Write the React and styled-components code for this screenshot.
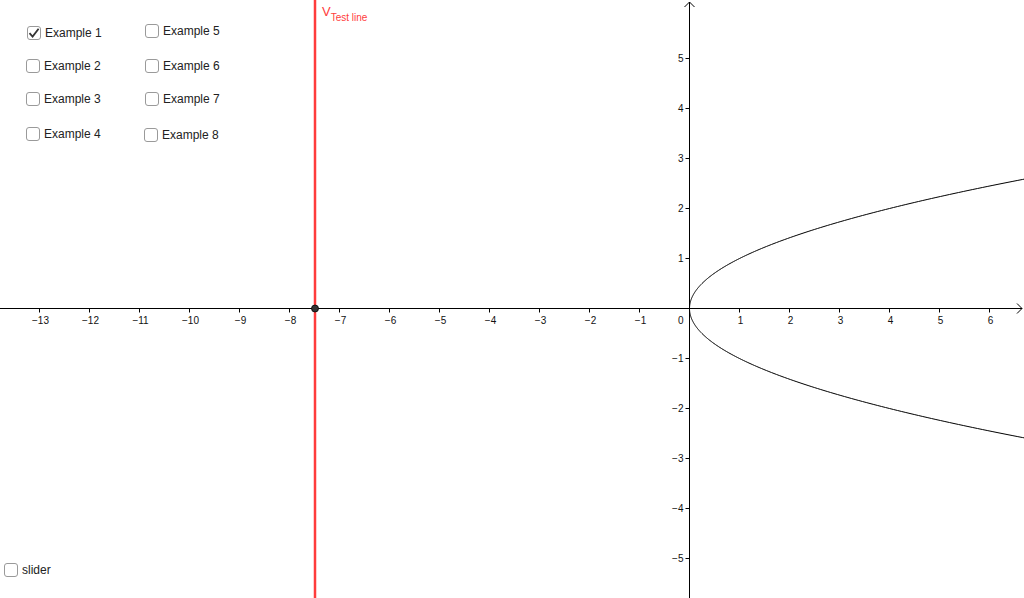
import React from 'react'
import styled, { createGlobalStyle } from 'styled-components'

const W = 1024
const H = 598
const OX = 689.5
const OY = 308.5
const UNIT = 50

const GlobalStyle = createGlobalStyle`
  html, body {
    margin: 0;
    padding: 0;
    background: #fff;
    overflow: hidden;
  }
  body {
    font-family: "Liberation Sans", Arial, sans-serif;
  }
`

const Canvas = styled.div`
  position: relative;
  width: ${W}px;
  height: ${H}px;
  background: #fff;
  overflow: hidden;
`

const Graph = styled.svg`
  display: block;
  font-family: "Liberation Sans", Arial, sans-serif;
`

const Toggle = styled.label`
  position: absolute;
  left: ${({ x }) => x}px;
  top: ${({ y }) => y}px;
  display: flex;
  align-items: center;
  gap: 4px;
  font-size: 12px;
  color: #222;
  cursor: pointer;
  user-select: none;
`

const Box = styled.span`
  box-sizing: border-box;
  width: 14px;
  height: 14px;
  border: 1.5px solid #9a9a9a;
  border-radius: 3px;
  background: #fff;
  display: flex;
  align-items: center;
  justify-content: center;
`

const RedLabel = styled.div`
  position: absolute;
  left: 322px;
  top: 5px;
  color: #ff3c3c;
  font-size: 13px;
  line-height: 1;
`

const Sub = styled.sub`
  font-size: 10px;
  vertical-align: -5px;
`

function CheckBox({ x, y, label, checked }) {
  return (
    <Toggle x={x} y={y}>
      <Box>
        {checked && (
          <svg width="12" height="12" viewBox="0 0 12 12">
            <path d="M1.5 6.2 L4.6 9.6 L10.6 1.8" fill="none" stroke="#333" strokeWidth="1.8" />
          </svg>
        )}
      </Box>
      {label}
    </Toggle>
  )
}

const toggles = [
  { x: 27, y: 26, label: 'Example 1', checked: true },
  { x: 26, y: 59, label: 'Example 2' },
  { x: 26, y: 92, label: 'Example 3' },
  { x: 26, y: 127, label: 'Example 4' },
  { x: 145, y: 24, label: 'Example 5' },
  { x: 145, y: 59, label: 'Example 6' },
  { x: 145, y: 92, label: 'Example 7' },
  { x: 144, y: 128, label: 'Example 8' },
  { x: 4, y: 563, label: 'slider' },
]

const fmt = (n) => (n < 0 ? '\u2212' + Math.abs(n) : String(n))

function parabola() {
  const pts = []
  for (let t = -2.7; t <= 2.7001; t += 0.02) {
    pts.push(`${(OX + t * t * UNIT).toFixed(2)},${(OY - t * UNIT).toFixed(2)}`)
  }
  return 'M' + pts.join(' L')
}

export default function App() {
  const xs = []
  for (let i = -13; i <= 6; i++) if (i !== 0) xs.push(i)
  const ys = []
  for (let i = -5; i <= 5; i++) if (i !== 0) ys.push(i)

  return (
    <>
      <GlobalStyle />
      <Canvas>
        <Graph width={W} height={H} viewBox={`0 0 ${W} ${H}`}>
          <line x1="0" y1={OY} x2={W - 2} y2={OY} stroke="#000" strokeWidth="1" />
          <path d={`M${W - 7} ${OY - 5} L${W - 2} ${OY} L${W - 7} ${OY + 5}`} fill="none" stroke="#000" strokeWidth="1" />
          <line x1={OX} y1="2" x2={OX} y2={H} stroke="#000" strokeWidth="1" />
          <path d={`M${OX - 5} 7 L${OX} 2 L${OX + 5} 7`} fill="none" stroke="#000" strokeWidth="1" />

          {xs.map((i) => (
            <g key={`x${i}`}>
              <line x1={OX + i * UNIT} y1={OY} x2={OX + i * UNIT} y2={OY + 4} stroke="#000" />
              <text x={OX + i * UNIT + 1} y={OY + 15} fontSize="10" textAnchor="middle" fill="#111">
                {fmt(i)}
              </text>
            </g>
          ))}
          <text x={OX - 6} y={OY + 15} fontSize="10" textAnchor="end" fill="#111">0</text>

          {ys.map((i) => (
            <g key={`y${i}`}>
              <line x1={OX - 4} y1={OY - i * UNIT} x2={OX} y2={OY - i * UNIT} stroke="#000" />
              <text x={OX - 6} y={OY - i * UNIT + 3.5} fontSize="10" textAnchor="end" fill="#111">
                {fmt(i)}
              </text>
            </g>
          ))}

          <path d={parabola()} fill="none" stroke="#000" strokeWidth="1" />

          <line x1="315" y1="0" x2="315" y2={H} stroke="#ff3c3c" strokeWidth="2.5" />
          <circle cx="315" cy={OY} r="3.5" fill="#333" stroke="#000" strokeWidth="0.8" />
        </Graph>

        <RedLabel>
          V<Sub>Test line</Sub>
        </RedLabel>

        {toggles.map((t) => (
          <CheckBox key={t.label} {...t} />
        ))}
      </Canvas>
    </>
  )
}
